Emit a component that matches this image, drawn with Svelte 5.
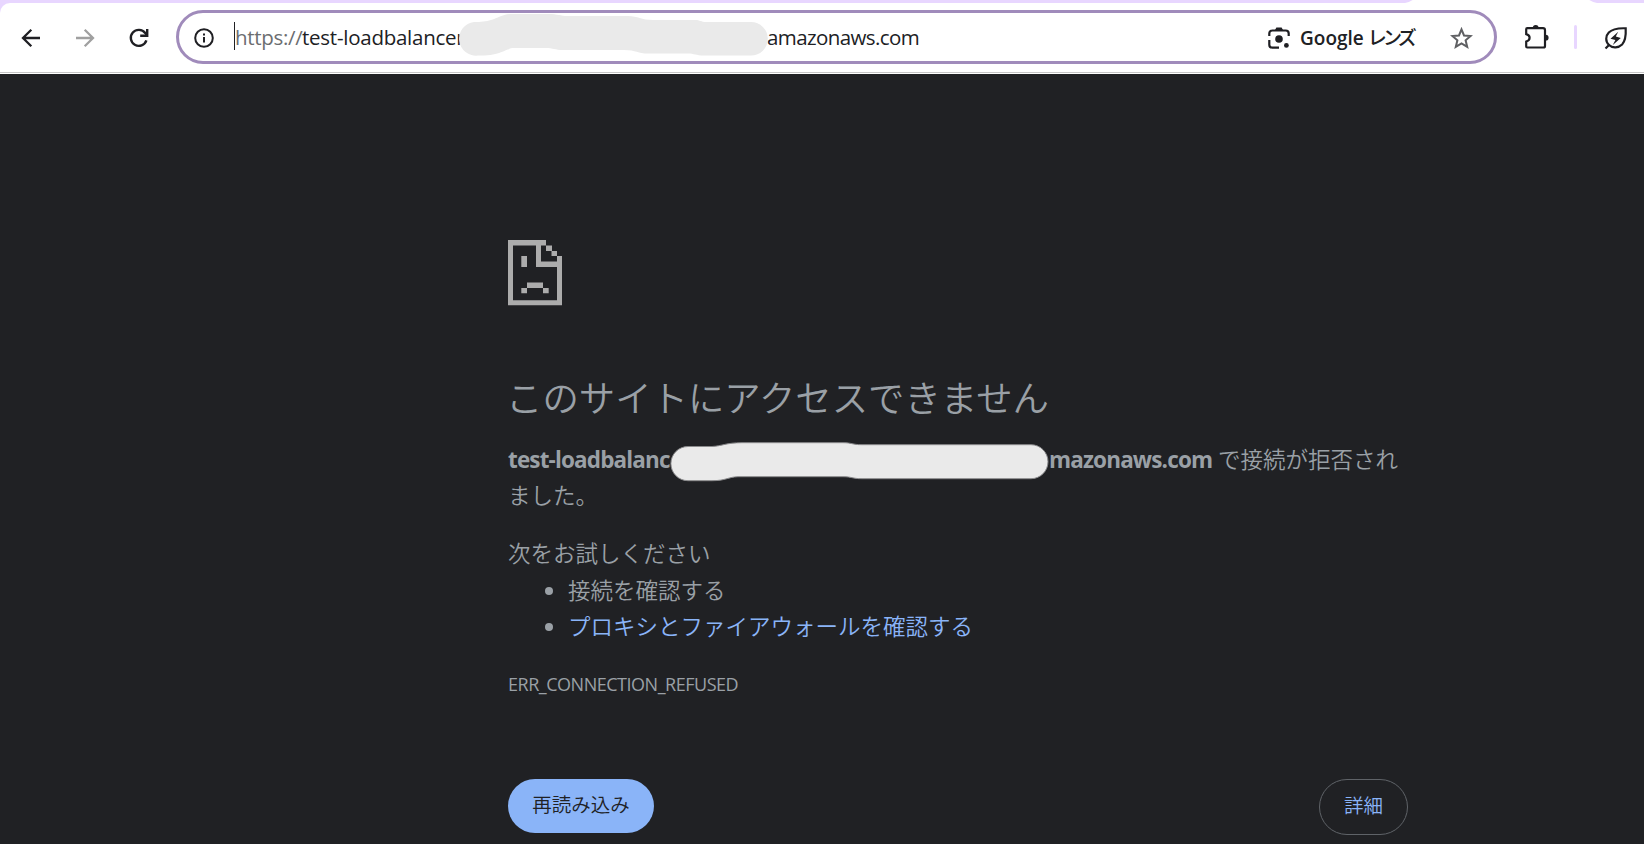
<script lang="ts">
	const scheme = 'https://';
	const suggestions = [
		{ text: '接続を確認する', link: false },
		{ text: 'プロキシとファイアウォールを確認する', link: true }
	];
</script>

<div class="window">
	<div class="tabstrip"><div class="tab"></div></div>
	<header class="toolbar">
		<nav class="nav">
			<svg width="20" height="20" viewBox="0 0 20 20" fill="none" stroke="#1f1f23" stroke-width="2.3">
				<path d="M19 10H2.5M10.3 1.7L2 10l8.3 8.3" />
			</svg>
			<svg width="20" height="20" viewBox="0 0 20 20" fill="none" stroke="#a0a0a0" stroke-width="2.3">
				<path d="M1 10h16.5M9.7 1.7L18 10l-8.3 8.3" />
			</svg>
			<svg width="20" height="20" viewBox="0 0 20 20" fill="none" stroke="#1f1f23" stroke-width="2.4">
				<path d="M17.4 12.4A8 8 0 1 1 16.2 5L17.8 7" />
				<path d="M18.2 1v6.8h-7" />
			</svg>
		</nav>

		<div class="omnibox">
			<svg class="info" width="20" height="20" viewBox="0 0 20 20">
				<circle cx="10" cy="10" r="8.8" fill="none" stroke="#1f1f23" stroke-width="2" />
				<path d="M9 9h2v5.6H9zM9 5.4h2v2H9z" fill="#1f1f23" />
			</svg>
			<div class="url">
				<span class="caret"></span>
				<span class="scheme">{scheme}</span>
				<span class="host">test-loadbalancer</span>
				<svg class="mask" width="310" height="42" viewBox="460 14 310 42">
					<path
						fill="#eaeaea"
						d="M476 22Q486 22 493 20C501 18 504 14 515 14H550C560 14 562 16 570 16H630C640 16 643 20 655 20H697C702 20 703 22 708 22H753A16.8 16.8 0 0 1 753 55.6H706C698 55.6 696 53.6 690 53.6H650C640 53.6 638 50 626 50H565C557 50 555 48 548 48H516C508 48 504 55.6 480 55.6A16.8 16.8 0 0 1 476 22Z"
					/>
				</svg>
				<span class="domain">amazonaws.com</span>
			</div>
			<svg class="lens" width="22" height="22" viewBox="0 0 22 22">
				<g fill="none" stroke="#1f1f23" stroke-width="2.2">
					<path d="M1.3 9V6.5a3 3 0 0 1 3-3H17.7a3 3 0 0 1 3 3V9" />
					<path d="M1.3 13v4.7a3 3 0 0 0 3 3H11" />
				</g>
				<path d="M7 3l1.4-2.4h5.2L15 3z" fill="#1f1f23" />
				<circle cx="11" cy="12" r="3.8" fill="#1f1f23" />
				<circle cx="18.4" cy="18.4" r="2.4" fill="#1f1f23" />
			</svg>
			<span class="lens-label">Google <span class="kana">レンズ</span></span>
			<svg class="star" width="23" height="22" viewBox="0 0 23 22">
				<path
					d="M11.5 2.4L14 8.5l6.6.5-5 4.3 1.6 6.5-5.7-3.5-5.7 3.5 1.6-6.5-5-4.3L9 8.5z"
					fill="none"
					stroke="#5f6063"
					stroke-width="2"
				/>
			</svg>
		</div>

		<svg class="puzzle" width="26" height="26" viewBox="0 0 26 26">
			<path
				d="M3.2 4.2H19a2 2 0 0 1 2 2V22a1.5 1.5 0 0 1-1.5 1.5H3.2a1 1 0 0 1-1-1v-5q3.4-.8 3.400-3.700t-3.400-3.700V5.2a1 1 0 0 1 1-1z"
				fill="none"
				stroke="#1f1f23"
				stroke-width="2.2"
			/>
			<path d="M8.800 4a2.900 3 0 0 1 5.800 0zM21.600 10.800a3 2.900 0 0 1 0 5.800z" fill="#1f1f23" />
		</svg>
		<span class="divider"></span>
		<svg class="leaf" width="24" height="24" viewBox="0 0 24 24">
			<path
				d="M1.500 22.500L5 19C1.200 15.500 1.500 10 4.800 6.600 8.200 3 14 2 21.700 2.300c.3 6.500-.2 12.700-3.600 16.200-3.600 3.500-9.400 4.100-13.100.5"
				fill="none"
				stroke="#1f1f23"
				stroke-width="2.2"
			/>
			<path d="M14.200 5.800L6.500 12.700l4.900 1.200-2.600 5 8-7-5-1.300z" fill="#1f1f23" />
		</svg>
	</header>

	<main class="page">
		<div class="content">
			<svg class="sad" width="54" height="66" viewBox="0 0 54 66" fill="#acacac">
				<path
					d="M0 0H38V5.500H44V11H49V16H54V65.300H0ZM5 5.500V60.300H49V27H28V5.500ZM33 5.500V21.500H49V16H43.500V11H38V5.500Z"
					fill-rule="evenodd"
				/>
				<path d="M13.300 16H19V27H13.300ZM19 42.500H35V48H19ZM13.300 48H19V53.200H13.300ZM35 48H40.700V53.200H35Z" />
			</svg>

			<h1>このサイトにアクセスできません</h1>
			<p class="summary">
				<strong class="name">test-loadbalanc</strong><svg
					class="mask"
					width="379"
					height="40"
					viewBox="670 442 379 40"
				>
					<path
						fill="#eaeaea"
						stroke="#8a8a8c"
						stroke-width="1"
						d="M688 446.500H712C722 446 726 442.700 742 442.700H843C852 442.700 852 444.700 862 444.700H1031A17 17 0 0 1 1031 478.700H862C852 478.700 852 476.700 843 476.700H738C728 477 726 480.700 712 480.700H688A17 17 0 0 1 688 446.500Z"
					/>
				</svg><strong class="tail">mazonaws.com</strong>
				<span class="refused">で接続が拒否され</span>
			</p>
			<p class="summary rest">ました。</p>

			<p class="try">次をお試しください</p>
			<ul>
				{#each suggestions as item}
					<li>
						{#if item.link}
							<a href="#proxy">{item.text}</a>
						{:else}
							{item.text}
						{/if}
					</li>
				{/each}
			</ul>
			<div class="code">ERR_CONNECTION_REFUSED</div>

			<div class="actions">
				<button class="btn reload">再読み込み</button>
				<button class="btn details">詳細</button>
			</div>
		</div>
	</main>
</div>

<style>
	:global(body) {
		margin: 0;
		overflow: hidden;
	}
	.window {
		width: 1644px;
		height: 844px;
		display: flex;
		flex-direction: column;
		background: #e8d6ff;
		font-family: 'Open Sans', 'Noto Sans CJK JP', sans-serif;
		overflow: hidden;
	}
	.window svg {
		display: block;
		flex: none;
	}
	.tabstrip {
		height: 3px;
		flex: none;
	}
	.tab {
		width: 192px;
		height: 3px;
		margin-left: 1405px;
		background: #fff;
		clip-path: polygon(4% 0, 96% 0, 98% 67%, 100% 100%, 0 100%, 2% 67%);
	}
	.toolbar {
		height: 71px;
		flex: none;
		box-sizing: border-box;
		display: flex;
		align-items: center;
		padding: 0 0 3px 21px;
		background: linear-gradient(#fff 69px, #c6c6c6 69px, #c6c6c6 70px, #fff 70px);
		border-radius: 10px 0 0 0;
	}
	.nav {
		display: flex;
		gap: 34px;
		width: 155px;
		padding-top: 2px;
	}
	.omnibox {
		width: 1321px;
		height: 54px;
		box-sizing: border-box;
		border: 3px solid #a08bbb;
		border-radius: 27px;
		display: flex;
		align-items: center;
		flex: none;
	}
	.info {
		margin-left: 15px;
		margin-top: 1px;
	}
	.url {
		display: flex;
		align-items: center;
		margin-left: 20px;
		width: 1034px;
		height: 48px;
		font-size: 20.5px;
		color: #202124;
		white-space: nowrap;
	}
	.caret {
		width: 1px;
		height: 28px;
		margin-bottom: 3px;
		background: #202124;
	}
	.scheme {
		width: 67px;
		letter-spacing: -0.3px;
		color: #6b6d70;
	}
	.host {
		width: 156px;
		letter-spacing: -0.25px;
	}
	.domain {
		letter-spacing: -0.6px;
	}
	.mask {
		position: relative;
	}
	.url .mask {
		margin: 0 -1px 4px 0;
	}
	.lens {
		margin-top: 2px;
	}
	.lens-label {
		width: 118px;
		margin-left: 10px;
		font-size: 19px;
		font-weight: 600;
		color: #202124;
		white-space: nowrap;
	}
	.kana {
		margin-left: -1px;
		font-weight: 500;
		letter-spacing: -3.8px;
	}
	.star {
		margin-left: 32px;
		margin-top: 1px;
	}
	.puzzle {
		margin-left: 27px;
	}
	.divider {
		width: 3px;
		height: 24px;
		margin-left: 24px;
		border-radius: 2px;
		background: #e8d6ff;
	}
	.leaf {
		margin-left: 27px;
		margin-top: 2px;
	}

	.page {
		flex: 1;
		display: flex;
		justify-content: center;
		background: #202124;
		color: #9aa0a6;
	}
	.content {
		width: 900px;
		margin-left: 272px;
		padding-top: 166px;
	}
	h1 {
		margin: 65px 0 0 -2px;
		font-size: 36.4px;
		font-weight: 350;
		line-height: 54px;
		white-space: nowrap;
	}
	p {
		margin: 0;
	}
	.summary,
	.try,
	ul {
		font-size: 22.5px;
		font-weight: 350;
		line-height: 36px;
	}
	.summary {
		margin-top: 17px;
		white-space: nowrap;
	}
	.summary strong {
		display: inline-block;
		font-weight: 700;
		letter-spacing: -0.85px;
	}
	.summary.rest {
		margin-top: -1px;
	}
	.name {
		width: 162px;
	}
	.summary .mask {
		display: inline-block;
		vertical-align: middle;
		margin: -3px 0;
	}
	.try {
		margin-top: 22px;
	}
	ul {
		margin: 1px 0 0;
		padding-left: 60px;
	}
	a {
		color: #8ab4f8;
		text-decoration: none;
	}
	.code {
		margin-top: 21px;
		font-size: 18px;
		line-height: 36px;
		letter-spacing: -0.48px;
	}
	.actions {
		display: flex;
		justify-content: space-between;
		align-items: flex-start;
		margin-top: 77px;
	}
	.btn {
		box-sizing: border-box;
		padding: 0 0 4px;
		border-radius: 28px;
		font-family: inherit;
		font-size: 19.5px;
		font-weight: 350;
	}
	.reload {
		width: 146px;
		height: 54px;
		border: none;
		background: #8ab4f8;
		color: #202124;
	}
	.details {
		width: 89px;
		height: 56px;
		border: 1px solid #5f6368;
		background: none;
		color: #8ab4f8;
	}
</style>
